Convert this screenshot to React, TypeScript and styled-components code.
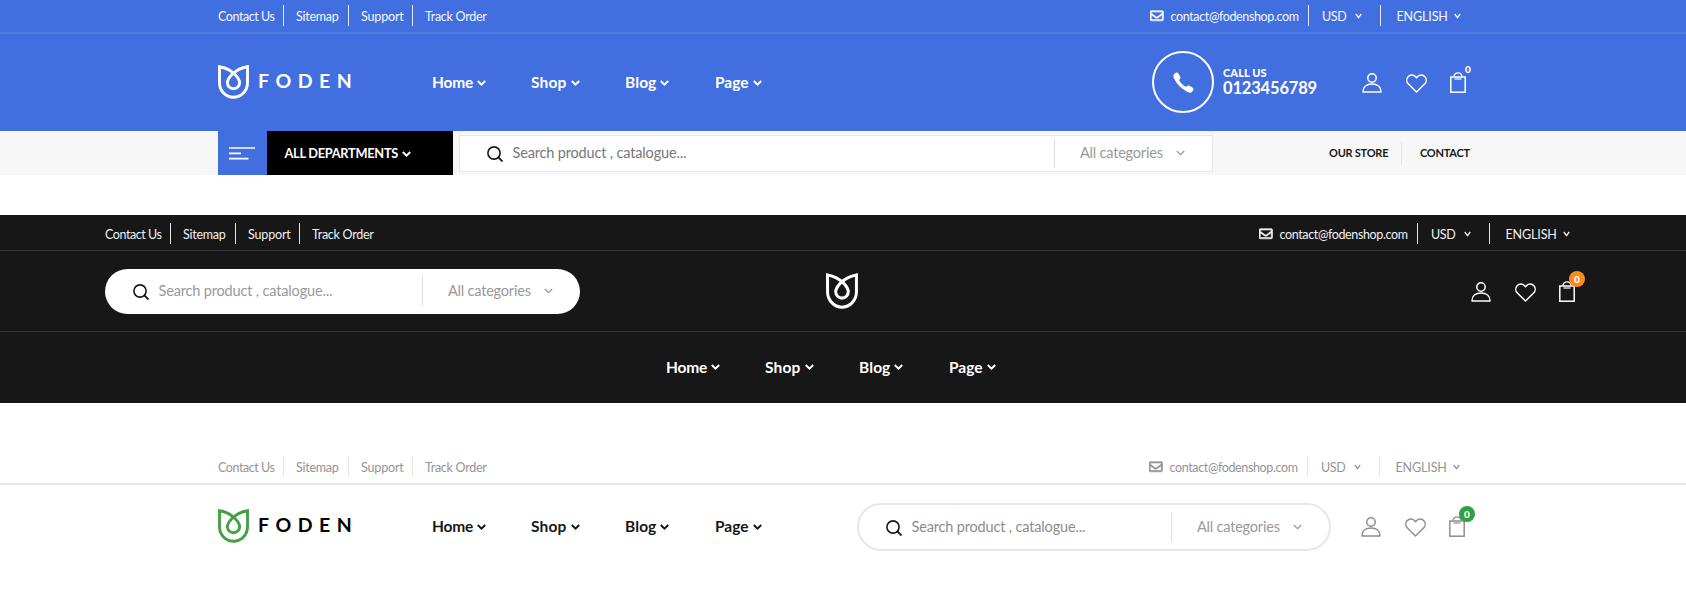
import React from "react";
import styled, { createGlobalStyle } from "styled-components";
import { FaRegEnvelope } from "react-icons/fa";
import { IoIosCall } from "react-icons/io";

const GlobalStyle = createGlobalStyle`
  *, *::before, *::after { box-sizing: border-box; }
  body { margin: 0; background: #fff; font-family: Lato, "Liberation Sans", sans-serif; overflow-x: hidden; }
  svg { display: block; flex: none; }
`;

interface Tone {
  bg: string;
  line: string;
  text: string;
  divider: string;
  nav: string;
  icon: string;
  badge: string;
}

const blue: Tone = { bg: "#426fdf", line: "#5079e1", text: "#f4f7fe", divider: "#e3eafb", nav: "#fff", icon: "#fff", badge: "transparent" };
const dark: Tone = { bg: "#171717", line: "#333", text: "#f1f1f1", divider: "#e4e4e4", nav: "#fff", icon: "#fff", badge: "#ff8a1f" };
const light: Tone = { bg: "#fff", line: "#e7e7e7", text: "#949494", divider: "#e6e6e6", nav: "#171717", icon: "#8f8f8f", badge: "#2fa044" };

const Label = styled.span<{ $size: number; $track?: number; $weight?: number; $width?: number; $color?: string }>`
  display: block;
  flex: none;
  width: ${(p) => (p.$width ? `${p.$width}px` : "auto")};
  font-size: ${(p) => p.$size}px;
  font-weight: ${(p) => p.$weight ?? 400};
  letter-spacing: ${(p) => p.$track ?? 0}px;
  line-height: 1.2;
  white-space: nowrap;
  color: ${(p) => p.$color ?? "inherit"};
`;

const Header = styled.header<{ $tone: Tone; $gap?: number }>`
  background: ${(p) => p.$tone.bg};
  margin-top: ${(p) => p.$gap ?? 0}px;
`;

const TopBar = styled.div<{ $tone: Tone; $height: number; $left: number; $width: number; $border: number }>`
  display: flex;
  justify-content: space-between;
  align-items: flex-end;
  height: ${(p) => p.$height}px;
  padding: 0 calc(100% - ${(p) => p.$left + p.$width}px) 6px ${(p) => p.$left}px;
  border-bottom: ${(p) => p.$border}px solid ${(p) => p.$tone.line};
  color: ${(p) => p.$tone.text};
`;

const LinkList = styled.nav`
  display: flex;
  height: 21px;
`;

const TopLink = styled.a<{ $width: number; $divider: string; $first?: boolean; $last?: boolean }>`
  display: flex;
  align-items: center;
  width: ${(p) => p.$width}px;
  padding-top: 1px;
  padding-left: ${(p) => (p.$first ? 0 : 12)}px;
  border-right: ${(p) => (p.$last ? "0" : `1px solid ${p.$divider}`)};
`;

const Utility = styled.div<{ $shift: number }>`
  display: flex;
  height: 21px;
  width: 318px;
  margin-right: ${(p) => p.$shift}px;
`;

const UtilityCell = styled.div<{ $width: number; $pad: number; $gap: number; $divider?: string }>`
  display: flex;
  align-items: center;
  gap: ${(p) => p.$gap}px;
  width: ${(p) => p.$width}px;
  padding-top: 1px;
  padding-left: ${(p) => p.$pad}px;
  border-right: ${(p) => (p.$divider ? `1px solid ${p.$divider}` : "0")};
`;

const MainRow = styled.div<{ $height: number; $left: number }>`
  display: flex;
  align-items: center;
  height: ${(p) => p.$height}px;
  padding-left: ${(p) => p.$left}px;
`;

const Brand = styled.div<{ $width: number }>`
  display: flex;
  align-items: center;
  gap: 9px;
  width: ${(p) => p.$width}px;
  padding-bottom: 1px;
`;

const BrandName = styled(Label)`
  padding-bottom: 2px;
`;

const Nav = styled.nav`
  display: flex;
`;

const NavItem = styled.a<{ $width: number; $color: string }>`
  display: flex;
  align-items: center;
  width: ${(p) => p.$width}px;
  color: ${(p) => p.$color};
`;

const Call = styled.div`
  display: flex;
  align-items: center;
  gap: 9px;
  width: 210px;
  margin-left: 390px;
  padding-bottom: 1px;
  color: #fff;
`;

const CallRing = styled.div`
  display: grid;
  place-items: center;
  width: 62px;
  height: 62px;
  border: 2px solid #fff;
  border-radius: 50%;
`;

const CallText = styled.div`
  display: flex;
  flex-direction: column;
`;

const Actions = styled.div<{ $color: string; $left: number }>`
  display: flex;
  align-items: flex-end;
  gap: 23.5px;
  height: 21px;
  margin-left: ${(p) => p.$left}px;
  color: ${(p) => p.$color};
`;

const CartButton = styled.div`
  position: relative;
`;

const CartCount = styled.span<{ $bg: string; $plain?: boolean }>`
  position: absolute;
  left: 10px;
  top: ${(p) => (p.$plain ? -11 : -10)}px;
  width: 16px;
  height: 16px;
  border-radius: 50%;
  background: ${(p) => p.$bg};
  color: #fff;
  font-size: 10px;
  font-weight: 900;
  line-height: 16px;
  text-align: center;
`;

const SearchBox = styled.div<{ $width: number; $height: number; $border: number; $pill?: boolean }>`
  display: flex;
  align-items: center;
  justify-content: space-between;
  flex: none;
  width: ${(p) => p.$width}px;
  height: ${(p) => p.$height}px;
  padding-left: ${(p) => (p.$border ? 27 : 28)}px;
  background: #fff;
  border: ${(p) => p.$border}px solid #e7e7e7;
  border-radius: ${(p) => (p.$pill ? 24 : 0)}px;
`;

const SearchField = styled.div`
  display: flex;
  align-items: center;
  gap: 9.5px;
`;

const SearchGlyph = styled.span`
  padding-top: 2px;
`;

const SearchSlot = styled.div`
  margin-left: 95px;
`;

const CategorySelect = styled.div<{ $width: number }>`
  display: flex;
  align-items: center;
  width: ${(p) => p.$width}px;
  height: 30px;
  padding-left: 25px;
  border-left: 1px solid #dedede;
  color: #999;
`;

const DepartmentBar = styled.div`
  display: flex;
  align-items: center;
  height: 44px;
  padding-left: 218px;
  background: #f7f7f7;
`;

const MenuButton = styled.div`
  width: 49px;
  height: 44px;
  padding: 15px 0 0 11px;
  background: #426fdf;
`;

const Departments = styled.div`
  display: flex;
  align-items: center;
  width: 186px;
  height: 44px;
  margin-right: 6px;
  padding: 1px 0 0 17.5px;
  background: #000;
  color: #fff;
`;

const StoreLinks = styled.div`
  display: flex;
  align-items: center;
  margin-left: 116px;
  color: #171717;
`;

const StoreLink = styled.a<{ $first?: boolean }>`
  display: flex;
  align-items: center;
  height: 23px;
  width: ${(p) => (p.$first ? 73 : 70)}px;
  padding-left: ${(p) => (p.$first ? 0 : 18)}px;
  border-right: ${(p) => (p.$first ? "1px solid #e4e4e4" : "0")};
`;

const CenterLogo = styled.div`
  width: 32px;
  margin-left: 246px;
`;

const NavBand = styled.div`
  display: flex;
  align-items: center;
  height: 72px;
  padding: 0 0 1px 666px;
  border-top: 1px solid #333;
`;

const Chevron = ({ w = 9, stroke = 2 }: { w?: number; stroke?: number }) => (
  <svg width={w} height={6} viewBox={`0 0 ${w} 6`} fill="none" stroke="currentColor" strokeWidth={stroke}>
    <path d={`M0.8 1 L${w / 2} 4.6 L${w - 0.8} 1`} />
  </svg>
);

const LogoMark = ({ color, w = 31, h = 34 }: { color: string; w?: number; h?: number }) => (
  <svg width={w} height={h} viewBox="0 0 31 34" preserveAspectRatio="none" fill="none" stroke={color} strokeWidth={2.9}>
    <path d="M1.5 1.8V17.7a14 14.6 0 0 0 28 0V1.8C22 3 17.5 6 14 9.5C11 12.5 9.4 15 9.4 17.8a6.1 5.9 0 0 0 12.2 0C21.6 15 20 12.5 17 9.5C13.5 6 9 3 1.5 1.8Z" />
  </svg>
);

const UserIcon = () => (
  <svg width={20} height={20} viewBox="0 0 20 20" fill="none" stroke="currentColor" strokeWidth={1.5}>
    <circle cx={10} cy={5} r={4.2} />
    <path d="M1 18.9C1 14 4.5 11.1 10 11.1S19 14 19 18.9Z" strokeLinejoin="round" />
  </svg>
);

const HeartIcon = () => (
  <svg width={21} height={19} viewBox="0 0 21 19" fill="none" stroke="currentColor" strokeWidth={1.5} strokeLinejoin="round">
    <path d="M10.5 18L2.4 10C0.4 8 0.3 4.8 2.1 2.7C4 0.5 7.4 0.4 9.3 2.4L10.5 3.7L11.7 2.4C13.6 0.4 17 0.5 18.9 2.7C20.7 4.8 20.6 8 18.6 10Z" />
  </svg>
);

const BagIcon = () => (
  <svg width={16} height={21} viewBox="0 0 16 21" fill="none" stroke="currentColor">
    <rect x={0.8} y={5} width={14.4} height={15.2} strokeWidth={1.5} />
    <path d="M3.8 4.6C4.4 2 6 0.9 8 0.9S11.6 2 12.2 4.6" strokeWidth={1.4} />
    <path d="M4.5 6.9H11.5" strokeWidth={2.2} opacity={0.6} />
  </svg>
);

const SearchIcon = () => (
  <svg width={16} height={16} viewBox="0 0 16 16" fill="none" stroke="#171717" strokeWidth={1.6}>
    <circle cx={7} cy={7} r={6.1} />
    <path d="M11.4 11.4L15.5 15.5" strokeWidth={1.9} />
  </svg>
);

const MenuIcon = () => (
  <svg width={26} height={14} viewBox="0 0 26 14" stroke="#fff" strokeWidth={1.7}>
    <path d="M0 2H26M0 7.4H12M0 12.7H19.5" />
  </svg>
);

const Links = ({ tone }: { tone: Tone }) => (
  <LinkList>
    <TopLink $width={66} $divider={tone.divider} $first><Label $size={12.5} $track={-0.43}>Contact Us</Label></TopLink>
    <TopLink $width={65} $divider={tone.divider}><Label $size={12.5} $track={-0.25}>Sitemap</Label></TopLink>
    <TopLink $width={64} $divider={tone.divider}><Label $size={12.5} $track={-0.15}>Support</Label></TopLink>
    <TopLink $width={80} $divider={tone.divider} $last><Label $size={12.5} $track={-0.27}>Track Order</Label></TopLink>
  </LinkList>
);

const Utilities = ({ tone, shift = 0 }: { tone: Tone; shift?: number }) => (
  <Utility $shift={shift}>
    <UtilityCell $width={159} $pad={0} $gap={7} $divider={tone.divider}>
      <FaRegEnvelope size={13.5} stroke="currentColor" strokeWidth={24} />
      <Label $size={12.5} $track={-0.37}>contact@fodenshop.com</Label>
    </UtilityCell>
    <UtilityCell $width={72} $pad={13} $gap={0} $divider={tone.divider}>
      <Label $size={12.5} $track={-0.4} $width={33}>USD</Label>
      <Chevron w={7} stroke={1.3} />
    </UtilityCell>
    <UtilityCell $width={85} $pad={15.5} $gap={0}>
      <Label $size={12.5} $track={-0.13} $width={57}>ENGLISH</Label>
      <Chevron w={7} stroke={1.3} />
    </UtilityCell>
  </Utility>
);

const Menu = ({ color }: { color: string }) => (
  <Nav>
    <NavItem $width={99} $color={color}><Label $size={15.5} $weight={700} $track={-0.2} $width={44.5}>Home</Label><Chevron /></NavItem>
    <NavItem $width={94} $color={color}><Label $size={15.5} $weight={700} $track={0.15} $width={39.5}>Shop</Label><Chevron /></NavItem>
    <NavItem $width={90} $color={color}><Label $size={15.5} $weight={700} $track={0.1} $width={35}>Blog</Label><Chevron /></NavItem>
    <NavItem $width={47} $color={color}><Label $size={15.5} $weight={700} $width={37.5}>Page</Label><Chevron /></NavItem>
  </Nav>
);

const Search = ({ width, height, border, pill, dim }: { width: number; height: number; border: number; pill?: boolean; dim: string }) => (
  <SearchBox $width={width} $height={height} $border={border} $pill={pill}>
    <SearchField>
      <SearchGlyph><SearchIcon /></SearchGlyph>
      <Label $size={14.5} $track={-0.16} $color={dim}>Search product , catalogue...</Label>
    </SearchField>
    <CategorySelect $width={158}>
      <Label $size={14.5} $track={-0.2} $width={96}>All categories</Label>
      <Chevron w={9} stroke={1.3} />
    </CategorySelect>
  </SearchBox>
);

const UserActions = ({ tone, left, plain }: { tone: Tone; left: number; plain?: boolean }) => (
  <Actions $color={tone.icon} $left={left}>
    <UserIcon />
    <HeartIcon />
    <CartButton>
      <BagIcon />
      <CartCount $bg={tone.badge} $plain={plain}>0</CartCount>
    </CartButton>
  </Actions>
);

export default function App() {
  return (
    <>
      <GlobalStyle />
      <Header $tone={blue}>
        <TopBar $tone={blue} $height={34} $left={218} $width={1250} $border={2}>
          <Links tone={blue} />
          <Utilities tone={blue} />
        </TopBar>
        <MainRow $height={97} $left={218}>
          <Brand $width={214}>
            <LogoMark color="#fff" />
            <BrandName $size={19.5} $weight={700} $track={6.5} $color="#fff">FODEN</BrandName>
          </Brand>
          <Menu color={blue.nav} />
          <Call>
            <CallRing><IoIosCall size={27} /></CallRing>
            <CallText>
              <Label $size={11} $weight={900} $track={0.1}>CALL US</Label>
              <Label $size={16.5} $weight={700} $track={-0.17}>0123456789</Label>
            </CallText>
          </Call>
          <UserActions tone={blue} left={0} plain />
        </MainRow>
        <DepartmentBar>
          <MenuButton><MenuIcon /></MenuButton>
          <Departments>
            <Label $size={12.75} $weight={700} $track={-0.26} $width={117}>ALL DEPARTMENTS</Label>
            <Chevron />
          </Departments>
          <Search width={754} height={37} border={1} dim="#777" />
          <StoreLinks>
            <StoreLink $first><Label $size={11} $weight={700} $track={-0.25}>OUR STORE</Label></StoreLink>
            <StoreLink><Label $size={11} $weight={700} $track={-0.25}>CONTACT</Label></StoreLink>
          </StoreLinks>
        </DepartmentBar>
      </Header>

      <Header $tone={dark} $gap={40}>
        <TopBar $tone={dark} $height={36} $left={105} $width={1472} $border={1}>
          <Links tone={dark} />
          <Utilities tone={dark} />
        </TopBar>
        <MainRow $height={80} $left={105}>
          <Search width={475} height={45} border={0} pill dim="#999" />
          <CenterLogo><LogoMark color="#fff" w={32} h={36} /></CenterLogo>
          <UserActions tone={dark} left={613} />
        </MainRow>
        <NavBand><Menu color={dark.nav} /></NavBand>
      </Header>

      <Header $tone={light} $gap={40}>
        <TopBar $tone={light} $height={42} $left={218} $width={1250} $border={2}>
          <Links tone={light} />
          <Utilities tone={light} shift={1} />
        </TopBar>
        <MainRow $height={83} $left={218}>
          <Brand $width={214}>
            <LogoMark color="#43a047" />
            <BrandName $size={19.5} $weight={700} $track={6.5} $color="#000">FODEN</BrandName>
          </Brand>
          <Menu color={light.nav} />
          <SearchSlot>
            <Search width={474} height={48} border={2} pill dim="#8c8c8c" />
          </SearchSlot>
          <UserActions tone={light} left={30} />
        </MainRow>
      </Header>
    </>
  );
}
